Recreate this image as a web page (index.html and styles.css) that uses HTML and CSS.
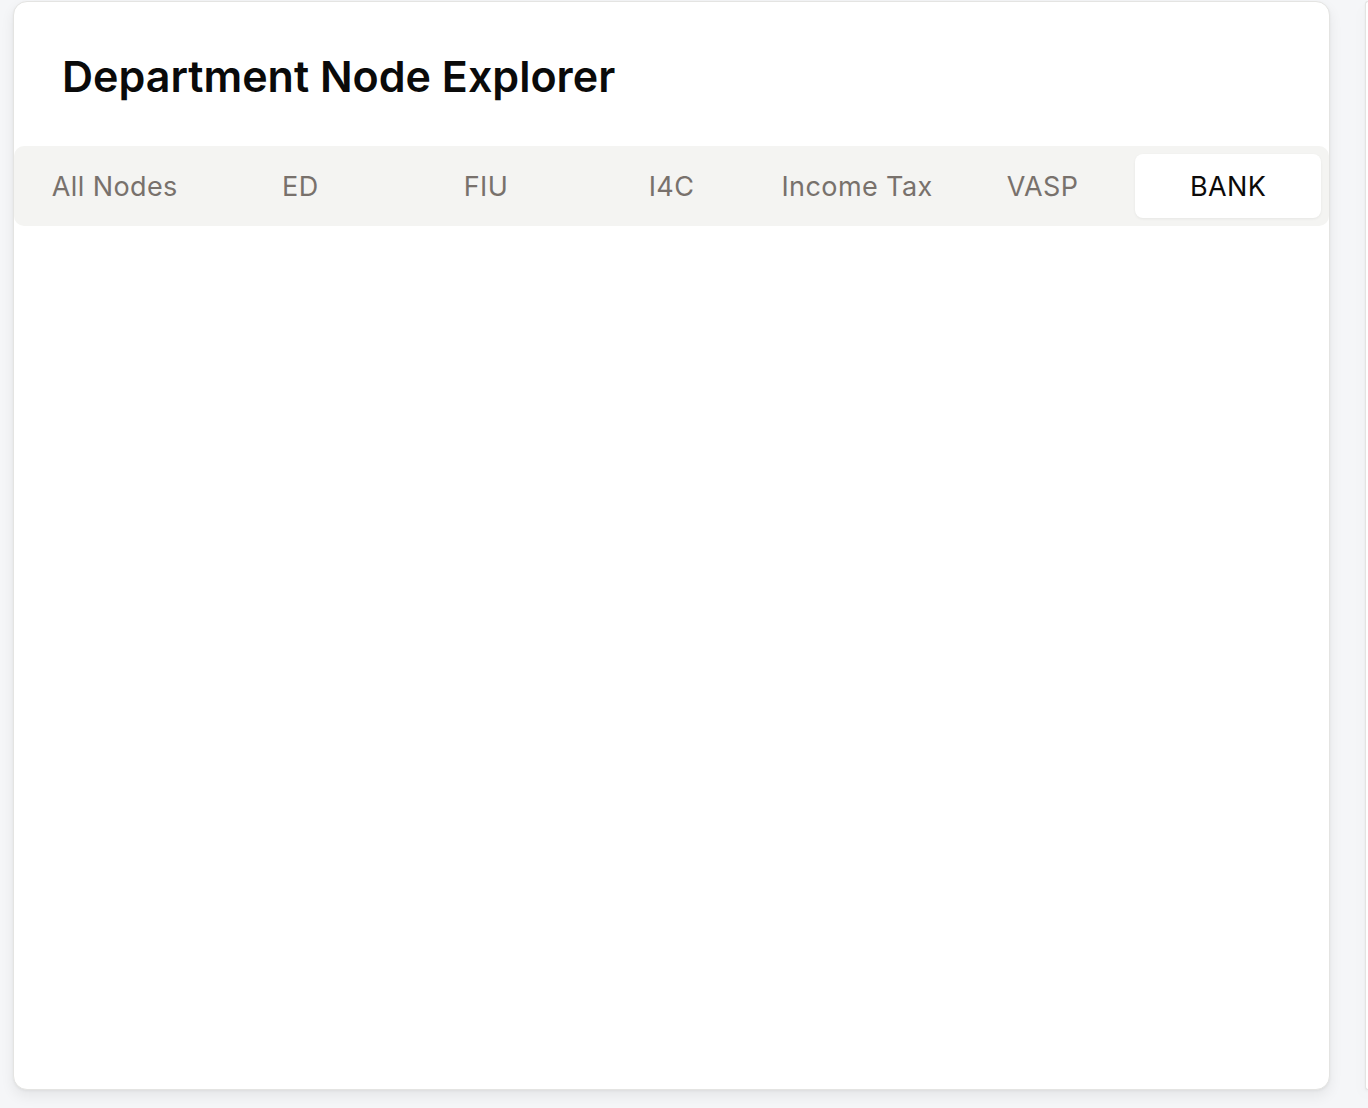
FILE: index.html
```html
<!DOCTYPE html>
<html lang="en">
<head>
<meta charset="utf-8">
<title>Department Node Explorer</title>
<link rel="stylesheet" href="styles.css">
</head>
<body>
<div class="row">
  <section class="card">
    <header class="card-header">
      <h1 class="title">Department Node Explorer</h1>
    </header>
    <nav class="tabs">
      <button class="tab">All Nodes</button>
      <button class="tab">ED</button>
      <button class="tab">FIU</button>
      <button class="tab">I4C</button>
      <button class="tab">Income Tax</button>
      <button class="tab">VASP</button>
      <button class="tab active">BANK</button>
    </nav>
    <div class="content"></div>
  </section>
  <section class="card side"></section>
</div>
</body>
</html>
```
FILE: styles.css
```css
html, body {
  margin: 0;
  padding: 0;
  background: #f5f6f8;
  font-family: Inter, "Noto Sans", sans-serif;
}
.row {
  display: flex;
  gap: 35px;
  padding: 1px 0 0 13px;
  width: 1368px;
  height: 1108px;
  box-sizing: border-box;
  overflow: hidden;
}
.card {
  flex: 0 0 1317px;
  height: 1089px;
  box-sizing: border-box;
  background: #fff;
  border: 1px solid #e4e4e2;
  border-radius: 14px;
  box-shadow: 0 6px 14px rgba(0,0,0,0.07), 0 1px 3px rgba(0,0,0,0.05);
  display: flex;
  flex-direction: column;
}
.card.side {
  flex: 1 1 auto;
  min-width: 0;
  border-right: none;
  border-radius: 14px 0 0 14px;
}
.card-header {
  height: 144px;
  padding: 0 48px;
  display: flex;
  align-items: center;
}
.title {
  margin: 0;
  font-size: 43px;
  font-weight: 600;
  letter-spacing: 0;
  color: #0a0a0a;
  padding-top: 4px;
}
.tabs {
  display: grid;
  grid-template-columns: repeat(7, 1fr);
  padding: 8px;
  background: #f4f4f2;
  border-radius: 10px;
  height: 80px;
  box-sizing: border-box;
}
.tab {
  border: none;
  background: transparent;
  font-family: inherit;
  font-size: 27px;
  letter-spacing: 0.015em;
  color: #78716c;
  border-radius: 8px;
  padding: 0;
  cursor: pointer;
}
.tab.active {
  background: #fff;
  color: #0c0a09;
  box-shadow: 0 1px 3px rgba(0,0,0,0.06);
}
.content {
  flex: 1;
}
```
